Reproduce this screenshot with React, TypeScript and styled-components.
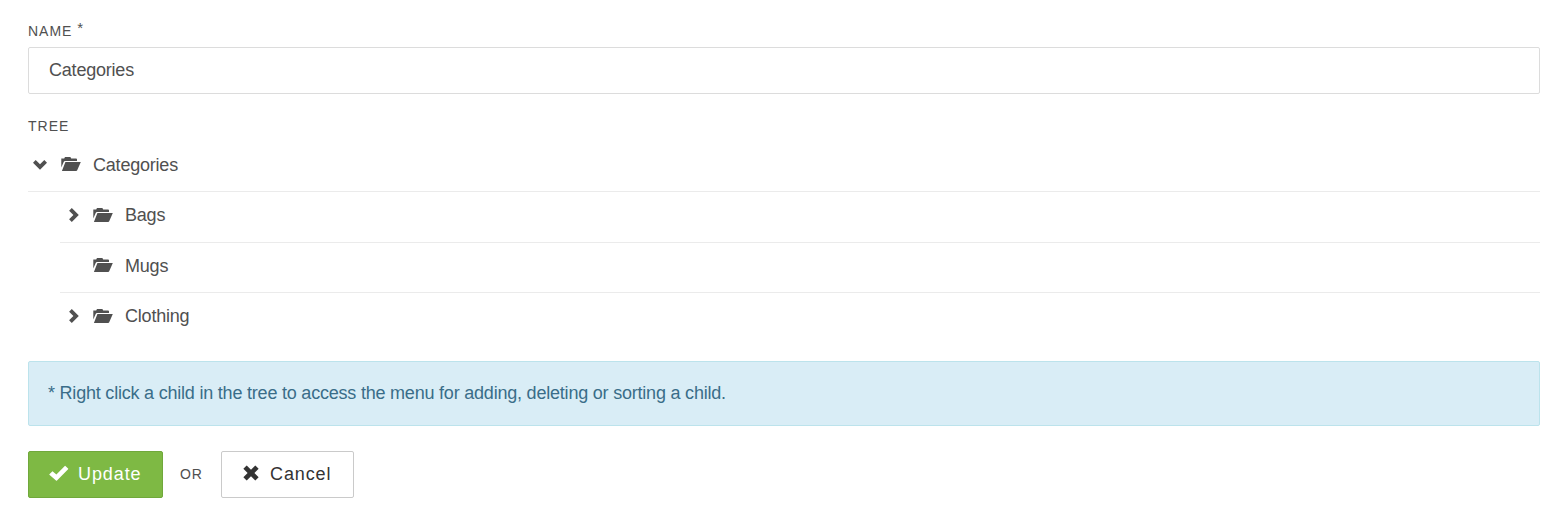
import React from "react";
import styled, { createGlobalStyle } from "styled-components";

const GlobalStyle = createGlobalStyle`
  *, *::before, *::after { box-sizing: border-box; }
  body {
    margin: 0;
    background: #fff;
    color: #505050;
    font: 18px/24px "Liberation Sans", Arial, sans-serif;
    letter-spacing: -0.21px;
  }
`;

const Form = styled.form`
  padding: 19px 19px 0 28px;
`;

const Label = styled.label`
  display: block;
  height: 24px;
  font-size: 14px;
  letter-spacing: 1px;
  text-transform: uppercase;
`;

const Required = styled.span`
  position: relative;
  top: -3px;
  font-size: 15px;
`;

const TextInput = styled.input`
  display: block;
  width: 100%;
  height: 47px;
  margin: 4px 0 20px;
  padding: 0 20px;
  border: 1px solid #dcdcdc;
  border-radius: 2px;
  background: #fff;
  color: #505050;
  font: inherit;
  letter-spacing: inherit;
  outline: none;
`;

const Tree = styled.div`
  margin-bottom: 18px;
`;

const Branch = styled.div`
  padding-left: 32px;
`;

const Row = styled.div<{ $line?: boolean; $root?: boolean; $height: number }>`
  display: flex;
  align-items: center;
  height: ${(p) => p.$height}px;
  padding-bottom: ${(p) => (p.$root ? 0 : 4)}px;
  border-bottom: ${(p) => (p.$line ? "1px solid #ebebeb" : "0")};
`;

const Toggle = styled.span<{ $child?: boolean }>`
  display: flex;
  flex: none;
  width: 33px;
  padding-left: ${(p) => (p.$child ? 9 : 5)}px;
`;

const FolderSlot = styled.span`
  display: flex;
  flex: none;
  width: 32px;
  padding-bottom: 1px;
`;

const Notice = styled.div`
  display: flex;
  align-items: center;
  height: 65px;
  padding: 0 19px 2px;
  border: 1px solid #bce3ec;
  border-radius: 2px;
  background: #d9edf6;
  color: #3a6d89;
`;

const Actions = styled.div`
  display: flex;
  align-items: center;
  margin-top: 25px;
`;

const Button = styled.button<{ $primary?: boolean }>`
  display: flex;
  align-items: center;
  width: ${(p) => (p.$primary ? 135 : 133)}px;
  height: 47px;
  padding: 0 0 2px ${(p) => (p.$primary ? 20 : 21)}px;
  gap: ${(p) => (p.$primary ? 9 : 11)}px;
  border: 1px solid ${(p) => (p.$primary ? "#70a83b" : "#cacaca")};
  border-radius: 2px;
  background: ${(p) => (p.$primary ? "#7eb944" : "#fff")};
  color: ${(p) => (p.$primary ? "#fff" : "#333")};
  font: inherit;
  letter-spacing: 0.9px;

  svg {
    margin-top: -1px;
  }
`;

const Or = styled.span`
  width: 58px;
  padding: 0 0 2px 17px;
  font-size: 14px;
  letter-spacing: 0.8px;
`;

const ChevronDown = () => (
  <svg width="14" height="10" viewBox="0 0 14 10" fill="currentColor">
    <path d="M2.7 0 7 4.3 11.3 0 14 2.7 7 9.7 0 2.7Z" />
  </svg>
);

const ChevronRight = () => (
  <svg width="10" height="14" viewBox="0 0 10 14" fill="currentColor">
    <path d="M0.1 2.7 2.8 0 9.8 7 2.8 14 0.1 11.3 4.4 7Z" />
  </svg>
);

const Folder = () => (
  <svg width="20" height="14" viewBox="0 0 20 14" fill="currentColor">
    <path d="M0.3 10.5V1.4H3.2L4 0H9.4L10.2 1.4H15.1Q16 1.4 16 2.3V4H4.1Q3.1 4 2.8 4.8Z" />
    <path d="M4.4 5H19.8L16.2 13.2Q15.9 14 15.1 14H0.9Z" />
  </svg>
);

const Check = () => (
  <svg width="20" height="16" viewBox="0 0 20 16" fill="currentColor">
    <path d="M0.4 9.2 3.2 6.4Q3.5 6.1 3.8 6.4L7.4 9.5 15.8 0.9Q16.1 0.6 16.4 0.9L19.1 3.6Q19.4 3.9 19.1 4.2L8 15.4Q7.5 15.9 7 15.4L0.4 9.8Q0.1 9.5 0.4 9.2Z" />
  </svg>
);

const Cross = () => (
  <svg width="16" height="16" viewBox="0 0 16 16" fill="currentColor">
    <path d="M4 0.7 8 4.7 12 0.7Q12.3 0.4 12.6 0.7L15.4 3.5Q15.7 3.8 15.4 4.1L11.4 8 15.4 11.9Q15.7 12.2 15.4 12.5L12.6 15.3Q12.3 15.6 12 15.3L8 11.3 4 15.3Q3.7 15.6 3.4 15.3L0.6 12.5Q0.3 12.2 0.6 11.9L4.6 8 0.6 4.1Q0.3 3.8 0.6 3.5L3.4 0.7Q3.7 0.4 4 0.7Z" />
  </svg>
);

const children = [
  { name: "Bags", expandable: true, height: 51 },
  { name: "Mugs", expandable: false, height: 50 },
  { name: "Clothing", expandable: true, height: 50 },
];

export default function App() {
  return (
    <>
      <GlobalStyle />
      <Form onSubmit={(e) => e.preventDefault()}>
        <Label htmlFor="name">
          Name <Required>*</Required>
        </Label>
        <TextInput id="name" defaultValue="Categories" />
        <Label as="div">Tree</Label>
        <Tree>
          <Row $line $root $height={54}>
            <Toggle><ChevronDown /></Toggle>
            <FolderSlot><Folder /></FolderSlot>
            Categories
          </Row>
          <Branch>
            {children.map((c, i) => (
              <Row key={c.name} $line={i < children.length - 1} $height={c.height}>
                <Toggle $child>{c.expandable && <ChevronRight />}</Toggle>
                <FolderSlot><Folder /></FolderSlot>
                {c.name}
              </Row>
            ))}
          </Branch>
        </Tree>
        <Notice>
          * Right click a child in the tree to access the menu for adding, deleting or sorting a child.
        </Notice>
        <Actions>
          <Button type="submit" $primary><Check />Update</Button>
          <Or>OR</Or>
          <Button type="button"><Cross />Cancel</Button>
        </Actions>
      </Form>
    </>
  );
}
